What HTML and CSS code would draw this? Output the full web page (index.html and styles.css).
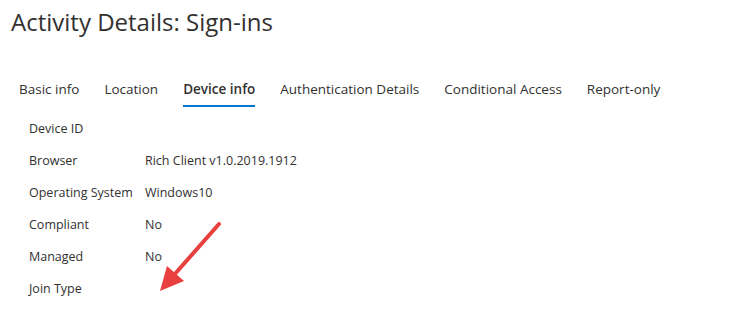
FILE: index.html
```html
<!DOCTYPE html>
<html>
<head>
    <meta charset="UTF-8">
    <title>Activity Details: Sign-ins</title>
    <link rel="stylesheet" href="styles.css">
</head>
<body>
    <div class="panel">
        <h1 class="title">Activity Details: Sign-ins</h1>
        <div class="tabs">
            <span class="tab">Basic info</span>
            <span class="tab">Location</span>
            <span class="tab active">Device info</span>
            <span class="tab">Authentication Details</span>
            <span class="tab">Conditional Access</span>
            <span class="tab">Report-only</span>
        </div>
        <div class="details">
            <div class="label">Device ID</div><div class="value"></div>
            <div class="label">Browser</div><div class="value">Rich Client v1.0.2019.1912</div>
            <div class="label">Operating System</div><div class="value">Windows10</div>
            <div class="label">Compliant</div><div class="value">No</div>
            <div class="label">Managed</div><div class="value">No</div>
            <div class="label">Join Type</div><div class="value"></div>
        </div>
        <svg class="arrow" width="738" height="322" viewBox="0 0 738 322">
            <line x1="219" y1="224" x2="174" y2="275" stroke="#e8403f" stroke-width="4" stroke-linecap="round"/>
            <polygon points="160,291 167,266 184,281" fill="#e8403f"/>
        </svg>
    </div>
</body>
</html>
```

FILE: styles.css
```css
body {
    margin: 0;
    background-color: #ffffff;
    font-family: "Open Sans", "Noto Sans", sans-serif;
    color: #323130;
}
.panel {
    position: relative;
    width: 738px;
    height: 322px;
}
.title {
    margin: 0;
    padding: 6px 0 0 11px;
    font-size: 24px;
    font-weight: 400;
    line-height: 32px;
}
.tabs {
    display: flex;
    gap: 25px;
    padding: 41px 0 0 19px;
    font-size: 13.5px;
}
.tab {
    line-height: 20px;
    padding-bottom: 6px;
    border-bottom: 2px solid transparent;
}
.tab.active {
    font-weight: 600;
    border-bottom-color: #0078d4;
}
.details {
    display: grid;
    grid-template-columns: 116px auto;
    grid-auto-rows: 32px;
    align-items: center;
    padding: 5px 0 0 29px;
    font-size: 12.5px;
}
.arrow {
    position: absolute;
    left: 0;
    top: 0;
    pointer-events: none;
}
```
